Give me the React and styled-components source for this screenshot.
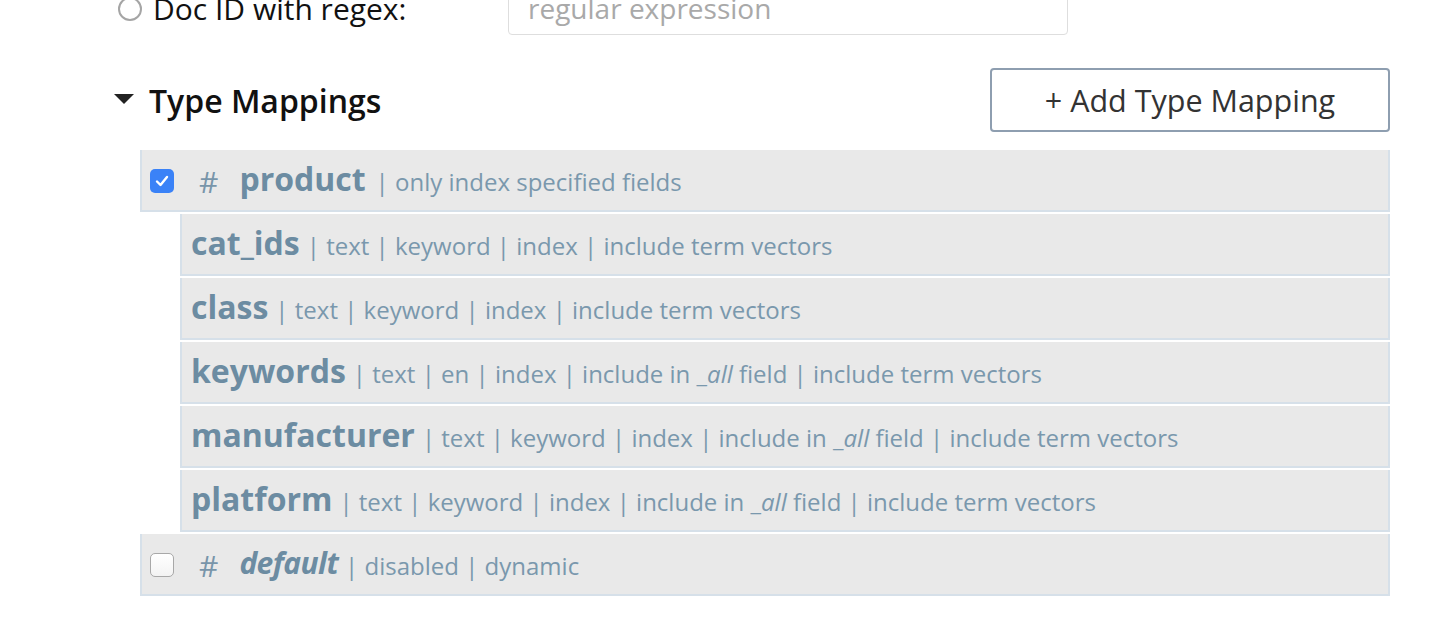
import React from "react";
import styled, { createGlobalStyle } from "styled-components";

const Global = createGlobalStyle`
  html, body { margin: 0; padding: 0; background: #fff; }
  body { font-family: "Open Sans", "Noto Sans", sans-serif; overflow: hidden; }
`;

const Page = styled.div`
  width: 1442px;
  height: 638px;
  overflow: hidden;
`;

const Inner = styled.div`
  margin-top: -19px;
  padding: 0 52px 0 114px;
`;

const RegexRow = styled.div`
  display: flex;
  align-items: center;
  height: 54px;
`;

const RadioCircle = styled.span`
  box-sizing: border-box;
  width: 24px;
  height: 24px;
  border-radius: 50%;
  border: 2px solid #a5a5a5;
  background: #fff;
  margin-left: 4px;
  margin-top: 2px;
  flex: none;
`;

const RegexLabel = styled.span`
  font-size: 30px;
  color: #111;
  margin-left: 11px;
  width: 355px;
  flex: none;
`;

const TextInput = styled.div`
  box-sizing: border-box;
  width: 560px;
  height: 54px;
  border: 1.5px solid #dedede;
  border-radius: 4px;
  display: flex;
  align-items: center;
  padding-left: 19px;
  font-size: 28px;
  color: #a9a9a9;
`;

const HeaderRow = styled.div`
  display: flex;
  align-items: center;
  justify-content: space-between;
  margin-top: 33px;
`;

const Heading = styled.div`
  display: flex;
  align-items: center;
  font-size: 32px;
  font-weight: 600;
  color: #111;
`;

const Caret = styled.span`
  width: 0;
  height: 0;
  border-left: 10px solid transparent;
  border-right: 10px solid transparent;
  border-top: 10px solid #222;
  margin-right: 15px;
  margin-top: -3px;
`;

const AddButton = styled.button`
  box-sizing: border-box;
  width: 400px;
  height: 64px;
  border: 2px solid #8e9eb0;
  border-radius: 4px;
  background: #fff;
  font-family: "Open Sans", "Noto Sans", sans-serif;
  font-size: 30.5px;
  color: #333;
  padding: 0;
  cursor: pointer;
`;

const List = styled.div`
  margin-top: 18px;
  margin-left: 26px;
  display: flex;
  flex-direction: column;
  gap: 2px;
`;

const Row = styled.div`
  box-sizing: border-box;
  height: 62px;
  margin-left: ${(p) => (p.$indent ? "40px" : "0")};
  background: #e9e9e9;
  border: 2px solid #d6e0e9;
  border-top: 0;
  display: flex;
  align-items: center;
  padding-left: ${(p) => (p.$indent ? "9px" : "8px")};
  color: #7895aa;
  white-space: nowrap;
`;

const Check = styled.span`
  box-sizing: border-box;
  width: 24px;
  height: 24px;
  border-radius: 5px;
  flex: none;
  display: flex;
  align-items: center;
  justify-content: center;
  margin-top: 2px;
  background: ${(p) => (p.$checked ? "#3a82f7" : "linear-gradient(#fff, #f3f3f3)")};
  border: ${(p) => (p.$checked ? "none" : "1.5px solid #a8a8a8")};
`;

const Hash = styled.span`
  font-size: 30px;
  color: #7895aa;
  margin-left: 25px;
  margin-right: 21px;
  margin-top: 2px;
`;

const Name = styled.span`
  font-size: ${(p) => (p.$italic ? "30px" : "32px")};
  font-weight: 700;
  font-style: ${(p) => (p.$italic ? "italic" : "normal")};
  letter-spacing: ${(p) => (p.$italic ? "-0.6px" : "0")};
  color: #6c8ca2;
  margin-top: -4px;
`;

const Meta = styled.span`
  font-size: 24px;
  color: #7a98ad;
  margin-left: ${(p) => (p.$wide ? "10px" : "7px")};
  margin-top: 2px;
  white-space: pre;
`;

const Em = styled.i`
  font-style: italic;
`;

const fields = [
  { name: "cat_ids", meta: ["text", "keyword", "index", "include term vectors"] },
  { name: "class", meta: ["text", "keyword", "index", "include term vectors"] },
  { name: "keywords", meta: ["text", "en", "index", "ALL", "include term vectors"] },
  { name: "manufacturer", meta: ["text", "keyword", "index", "ALL", "include term vectors"] },
  { name: "platform", meta: ["text", "keyword", "index", "ALL", "include term vectors"] },
];

function MetaText({ items, wide }) {
  return (
    <Meta $wide={wide}>
      {items.map((it, i) => (
        <React.Fragment key={i}>
          {"| "}
          {it === "ALL" ? (
            <>
              include in _<Em>all</Em> field
            </>
          ) : (
            it
          )}
          {i < items.length - 1 ? " " : ""}
        </React.Fragment>
      ))}
    </Meta>
  );
}

const Tick = () => (
  <svg width="14" height="12" viewBox="0 0 14 12">
    <path d="M2 6.5 L5.5 10 L12 2" fill="none" stroke="#fff" strokeWidth="2.4" strokeLinecap="round" strokeLinejoin="round" />
  </svg>
);

export default function App() {
  return (
    <Page>
      <Global />
      <Inner>
        <RegexRow>
          <RadioCircle />
          <RegexLabel>Doc ID with regex:</RegexLabel>
          <TextInput>regular expression</TextInput>
        </RegexRow>
        <HeaderRow>
          <Heading>
            <Caret />
            Type Mappings
          </Heading>
          <AddButton>+ Add Type Mapping</AddButton>
        </HeaderRow>
        <List>
          <Row>
            <Check $checked>
              <Tick />
            </Check>
            <Hash>#</Hash>
            <Name>product</Name>
            <MetaText wide items={["only index specified fields"]} />
          </Row>
          {fields.map((f) => (
            <Row $indent key={f.name}>
              <Name>{f.name}</Name>
              <MetaText items={f.meta} />
            </Row>
          ))}
          <Row>
            <Check />
            <Hash>#</Hash>
            <Name $italic>default</Name>
            <MetaText items={["disabled", "dynamic"]} />
          </Row>
        </List>
      </Inner>
    </Page>
  );
}
